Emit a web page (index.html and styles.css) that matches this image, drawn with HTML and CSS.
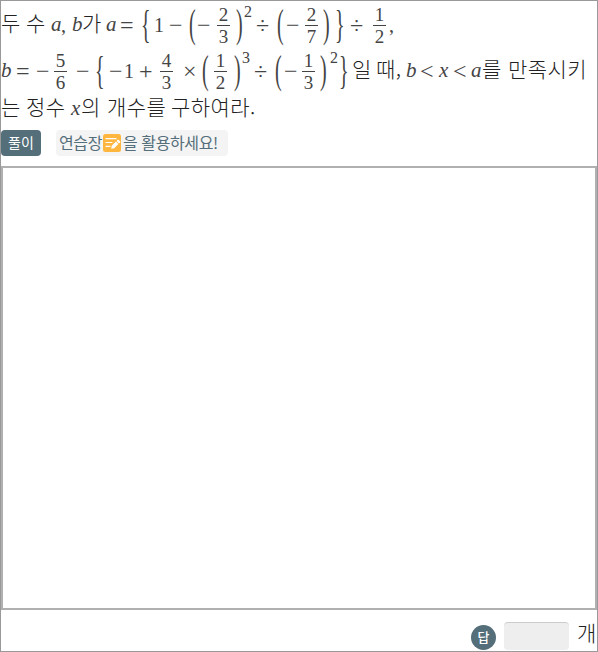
FILE: index.html
```html
<!DOCTYPE html>
<html lang="ko">
<head>
<meta charset="utf-8">
<title>정수의 개수</title>
<link rel="stylesheet" href="styles.css">
</head>
<body>
<main class="sheet">
  <section class="problem">
    <div class="line line-a">
      <span class="ko">두</span><span class="ko">수</span><i>a</i><span class="num">,</span><i>b</i><span class="ko">가</span><i>a</i><span class="op">=</span><span class="brace">{</span><span class="num">1</span><span class="op">−</span><span class="paren">(</span><span class="op">−</span><span class="frac"><b>2</b><b>3</b></span><span class="paren">)</span><sup>2</sup><span class="op">÷</span><span class="paren">(</span><span class="op">−</span><span class="frac"><b>2</b><b>7</b></span><span class="paren">)</span><span class="brace">}</span><span class="op">÷</span><span class="frac"><b>1</b><b>2</b></span><span class="num">,</span>
    </div>
    <div class="line line-b">
      <i>b</i><span class="op">=</span><span class="op">−</span><span class="frac"><b>5</b><b>6</b></span><span class="op">−</span><span class="brace">{</span><span class="op">−</span><span class="num">1</span><span class="op">+</span><span class="frac"><b>4</b><b>3</b></span><span class="op">×</span><span class="paren">(</span><span class="frac"><b>1</b><b>2</b></span><span class="paren">)</span><sup>3</sup><span class="op">÷</span><span class="paren">(</span><span class="op">−</span><span class="frac"><b>1</b><b>3</b></span><span class="paren">)</span><sup>2</sup><span class="brace">}</span><span class="ko">일</span><span class="ko">때,</span><i>b</i><span class="op">&lt;</span><i>x</i><span class="op">&lt;</span><i>a</i><span class="ko">를</span><span class="ko">만족시키</span>
    </div>
    <div class="line line-c">
      <span class="ko">는</span><span class="ko">정수</span><i>x</i><span class="ko">의</span><span class="ko">개수를</span><span class="ko">구하여라.</span>
    </div>
  </section>
  <div class="tools">
    <span class="badge">풀이</span>
    <span class="hint"><span>연습장</span><svg class="note" viewBox="0 0 18 18"><rect width="18" height="18" rx="2.5" fill="#ffb63f"/><path d="M3 4.7h10M3 8.5h6M3 12.3h4" stroke="#fff" stroke-width="1.2" stroke-linecap="round"/><path d="M8.2 14.8l.5-3 4.2-4.2 2.5 2.5-4.2 4.2zM13.5 7l1.2-1.2q.4-.4.8 0l1.7 1.7q.4.4 0 .8L16 9.5z" fill="#fff"/></svg><span>을 활용하세요!</span></span>
  </div>
  <div class="work"></div>
  <footer class="answer">
    <span class="dot">답</span>
    <span class="field"></span>
    <span class="ko">개</span>
  </footer>
</main>
</body>
</html>
```
FILE: styles.css
```css
* { box-sizing: border-box; }
body { margin: 0; background: #fff; color: #444; }
.sheet {
  width: 598px; height: 652px; border: 1px solid #999;
  display: flex; flex-direction: column; overflow: hidden;
}
.problem { height: 125px; padding-top: 1px; font: 20px/24px "Liberation Serif", serif; }
.line { display: grid; height: 46px; align-items: center; white-space: nowrap; }
.line-a { grid-template-columns: 25px 25px 10px 11px 10px 24px 14px 21px 13px 15px 20px 8px 20px 19px 8px 12px 21px 9px 19px 18px 12px 15px 23px 16px 10px; }
.line-b { grid-template-columns: 15px 20px 18px 22px 19px 14px 15px 15px 21px 23px 19px 12px 20px 8px 12px 21px 9px 18px 18px 10px 9px 13px 24px 30px 14px 19px 14px 18px 11px 26px 80px; }
.line-c { grid-template-columns: 25px 45px 10px 26px 64px 90px; height: 28px; }
.ko { font: 300 21px/24px "Noto Sans CJK KR", sans-serif; letter-spacing: .4px; color: #222; transform: translateY(-2px); }
.line-a .ko, .line-b .ko { transform: translateY(-3px); }
.line i { font-size: 21px; transform: translateY(-1px); }
.line-c i { transform: none; }
.op { font-size: 24px; line-height: 24px; }
.paren, .brace { font-size: 20px; transform: translateY(-2px) scaleY(1.95); transform-origin: 0 12px; }
.brace { transform: translateY(-1px) scaleY(2); }
.frac { width: 13px; display: flex; flex-direction: column; text-align: center; }
.frac b { font-weight: 400; font-size: 19px; line-height: 21px; }
.frac b + b { border-top: 1px solid #444; }
sup { font-size: 16px; line-height: 15px; align-self: start; padding-top: 2px; }
.tools { height: 40px; display: flex; align-items: flex-start; padding-top: 4px; gap: 15px; }
.badge {
  width: 40px; height: 26px; border-radius: 4px; background: #546e7a; color: #fff;
  text-align: center; font: 14px/25px "Noto Sans CJK KR", sans-serif;
}
.hint {
  width: 172px; height: 26px; border-radius: 4px; background: #f4f4f4; color: #546e7a;
  display: flex; align-items: center; padding-left: 3px; white-space: nowrap;
  font: 16px/24px "Noto Sans CJK KR", sans-serif; letter-spacing: -.4px;
}
.hint > span { transform: translateY(-1px); }
.note { width: 18px; height: 18px; margin: 0 2px 0 1px; }
.work { height: 444px; border: 2px solid #b0b0b0; }
.answer { height: 41px; display: flex; padding: 12px 0 0 470px; }
.dot {
  width: 25px; height: 25px; margin-top: 3px; border-radius: 50%; background: #546e7a; color: #fff;
  text-align: center; font: 500 13px/24px "Noto Sans CJK KR", sans-serif;
}
.field { width: 65px; height: 28px; margin: 0 8px; border-radius: 4px; background: #eee; border-top: 1px solid #ccc; }
```
